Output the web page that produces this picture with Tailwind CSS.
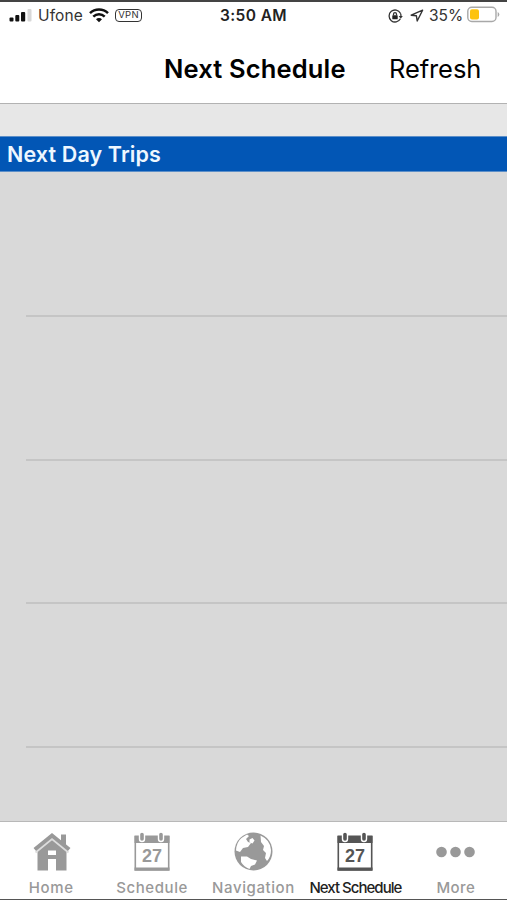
<!DOCTYPE html>
<html lang="en">
<head>
  <meta charset="UTF-8">
  <meta name="viewport" content="width=device-width, initial-scale=1.0">
  <title>Next Schedule</title>
  <script src="https://cdn.jsdelivr.net/npm/@tailwindcss/browser@4"></script>
</head>
<body class="bg-white font-['Inter','Liberation_Sans',sans-serif] text-black overflow-hidden">
  <div class="w-[507px] h-[900px] flex flex-col border-t-2 border-t-[#444] border-b border-b-[#555]">

    <!-- Status bar -->
    <div class="h-[27px] shrink-0 grid grid-cols-3 items-center text-[15.5px] leading-none text-[#333] whitespace-nowrap">
      <div class="flex items-center pl-[9px]">
        <svg class="w-[23px] h-[14px]" viewBox="0 0 23 14">
          <g fill="#111">
            <rect x="0.5" y="8.5" width="4" height="4" rx="1"/>
            <rect x="6.3" y="6" width="4" height="6.5" rx="1"/>
            <rect x="12" y="3" width="4.2" height="9.5" rx="1"/>
          </g>
          <rect x="18.5" y="0" width="4" height="12.5" rx="1" fill="#d8d8d8"/>
        </svg>
        <span class="ml-[6px] w-[45px] tracking-[0.1px]">Ufone</span>
        <svg class="ml-[6px] w-[20px] h-[15px]" viewBox="0 0 20 15" fill="none" stroke="#111" stroke-width="2.5">
          <path d="M1 5.2C6 .3 14 .3 19 5.2"/>
          <path d="M4.3 8.6c3.2-3.1 8.2-3.1 11.4 0"/>
          <path d="M7 11.2c1.6-1.6 4.4-1.6 6 0L10 14.2z" fill="#111" stroke="none"/>
        </svg>
        <span class="ml-[6px] mb-px w-[27px] h-[13px] flex items-center justify-center rounded-[4px] border border-[#333] text-[9.5px] tracking-[0.3px]">VPN</span>
      </div>
      <div class="text-center text-[15.5px] font-semibold tracking-[0.4px] text-[#222]">3:50 AM</div>
      <div class="flex items-center justify-end pr-[7px]">
        <svg class="w-[15px] h-[14px]" viewBox="0 0 15 14" fill="none" stroke="#333" stroke-width="1.3">
          <path d="M12.4 4.2A6 6 0 1 0 12.4 9.8"/>
          <path d="M10.7 7h4.1l-2 2.8z" fill="#333" stroke="none"/>
          <path d="M12.4 4.2q.8 1.4.5 3"/>
          <rect x="4.3" y="6.3" width="5.4" height="4" rx=".6" fill="#222" stroke="none"/>
          <path d="M5.5 6.5V5.2a1.5 1.5 0 0 1 3 0v1.3"/>
        </svg>
        <svg class="ml-[7px] mb-px w-[14px] h-[13px]" viewBox="0 0 14 13" fill="none" stroke="#333" stroke-width="1.4" stroke-linejoin="round">
          <path d="M12.6 1.2L1.2 6.2l5.2.6.8 5.2z"/>
        </svg>
        <span class="ml-[5px] w-[34px]">35%</span>
        <svg class="ml-[4px] mb-[2px] w-[33px] h-[17px]" viewBox="0 0 33 17">
          <rect x="0.8" y="1.2" width="28.2" height="14.3" rx="4" fill="#fff" stroke="#a8a8a8" stroke-width="1.4"/>
          <rect x="3" y="3.3" width="9" height="10.2" rx="2" fill="#fdc30f"/>
          <path d="M30.7 6v5q1.6-.8 1.6-2.5T30.7 6z" fill="#a8a8a8"/>
        </svg>
      </div>
    </div>

    <!-- Navigation bar -->
    <header class="h-[75px] shrink-0 flex items-center justify-end pt-[6px] pr-[26px] border-b border-[#b2b2b2] text-[25.5px] whitespace-nowrap">
      <h1 class="w-[182px] font-semibold tracking-[0.15px]">Next Schedule</h1>
      <button class="ml-[43px] w-[92px] text-left tracking-[-0.1px]">Refresh</button>
    </header>

    <!-- Trip list -->
    <main class="flex-1 min-h-0 overflow-hidden bg-[#d9d9d9] flex flex-col">
      <div class="h-[32px] shrink-0 bg-[#e7e7e7]"></div>
      <h2 class="h-[36px] shrink-0 flex items-center pt-px pl-[7px] bg-[#0256b5] border-y border-[#5d8fc8] text-[21.5px] font-semibold tracking-[0.12px] text-[#eef7ff] whitespace-nowrap">Next Day Trips</h2>
      <div class="ml-[26px] h-[145px] shrink-0 border-b-2 border-[#c5c5c5]"></div>
      <div class="ml-[26px] h-[144px] shrink-0 border-b-2 border-[#c5c5c5]"></div>
      <div class="ml-[26px] h-[143px] shrink-0 border-b-2 border-[#c5c5c5]"></div>
      <div class="ml-[26px] h-[144px] shrink-0 border-b-2 border-[#c5c5c5]"></div>
    </main>

    <!-- Tab bar -->
    <nav class="h-[78px] shrink-0 grid grid-cols-5 border-t border-[#b8b8b8] bg-white text-[15px] font-medium leading-[18px] text-[#999] whitespace-nowrap">
      <a class="flex flex-col items-center pt-[10px]">
        <svg class="w-[38px] h-[40px] ml-[2px]" viewBox="0 0 38 40" fill="#999">
          <path d="M28 2.5h5V15L28 11z"/>
          <path d="M4.500 19L19 7l14.500 12v19.500H23V24h-8v14.500H4.500z"/>
          <path d="M15 18.500h8V23h-8zM15 27h8v12h-8z" fill="#fff"/>
          <path d="M15 23h8v4h-8z"/>
          <path d="M2.500 20.500L19 7l16.500 13.500" fill="none" stroke="#ddd" stroke-width="2"/>
          <path d="M1.800 17.500L19 3.500l17.200 14" fill="none" stroke="#999" stroke-width="4"/>
        </svg>
        <span class="mt-[7px] ml-px tracking-[0.6px]">Home</span>
      </a>
      <a class="flex flex-col items-center pt-[10px]">
        <div class="relative w-[36px] h-[40px]">
          <svg class="w-[36px] h-[40px]" viewBox="0 0 36 40">
            <path d="M1.300 4v34h33.400V4" fill="#fff" stroke="#999" stroke-width="1.600"/>
            <path d="M.5 3.500h35V11H.5zM.5 35.500h35v3H.5z" fill="#999"/>
            <rect x="5.500" y="0" width="5" height="9.500" rx="2.500" fill="#999" stroke="#fff" stroke-width="1.400"/>
            <rect x="24.500" y="0" width="5" height="9.500" rx="2.500" fill="#999" stroke="#fff" stroke-width="1.400"/>
          </svg>
          <span class="absolute inset-x-0 top-[15px] text-center text-[18px] leading-[18px] font-bold font-['Liberation_Sans',sans-serif]">27</span>
        </div>
        <span class="mt-[7px] tracking-[0.6px]">Schedule</span>
      </a>
      <a class="flex flex-col items-center pt-[10px]">
        <svg class="w-[40px] h-[40px]" viewBox="0 0 40 40">
          <circle cx="20.500" cy="19.500" r="19" fill="#999"/>
          <g fill="#fff">
            <path d="M8.500 6Q3.500 10 3 18.500l4 1.500 3-4 5-1 3-4-3-1-2-3 3-3-2-1.500z"/>
            <path d="M16.500 7.500l3-1.500 2 2.500-2 3-3-1z"/>
            <path d="M27.500 3.500Q37.500 8 38 18q0 7-4 11l-2-3 1-5-3-3 1-4-3-4z"/>
            <path d="M8 24.500l6 0 4 2.500 6 1.500-2 4-4 1.500-1.500 3Q11 35 8 30z"/>
          </g>
        </svg>
        <span class="mt-[7px] tracking-[0.6px]">Navigation</span>
      </a>
      <a class="flex flex-col items-center pt-[10px] text-[#555]">
        <div class="relative w-[36px] h-[40px]">
          <svg class="w-[36px] h-[40px]" viewBox="0 0 36 40">
            <path d="M1.300 4v34h33.400V4" fill="#fff" stroke="#555" stroke-width="1.600"/>
            <path d="M.5 3.500h35V11H.5zM.5 35.500h35v3H.5z" fill="#555"/>
            <rect x="5.500" y="0" width="5" height="9.500" rx="2.500" fill="#555" stroke="#fff" stroke-width="1.400"/>
            <rect x="24.500" y="0" width="5" height="9.500" rx="2.500" fill="#555" stroke="#fff" stroke-width="1.400"/>
          </svg>
          <span class="absolute inset-x-0 top-[15px] text-center text-[18px] leading-[18px] font-bold font-['Liberation_Sans',sans-serif]">27</span>
        </div>
        <span class="mt-[7px] ml-px tracking-[-0.98px] text-[#222]">Next Schedule</span>
      </a>
      <a class="flex flex-col items-center pt-[10px]">
        <svg class="w-[40px] h-[40px]" viewBox="0 0 40 40" fill="#999">
          <circle cx="5.500" cy="20" r="5.300"/>
          <circle cx="19.500" cy="20" r="5.300"/>
          <circle cx="33.500" cy="20" r="5.300"/>
        </svg>
        <span class="mt-[7px] mr-px tracking-[0.4px]">More</span>
      </a>
    </nav>

  </div>
</body>
</html>
